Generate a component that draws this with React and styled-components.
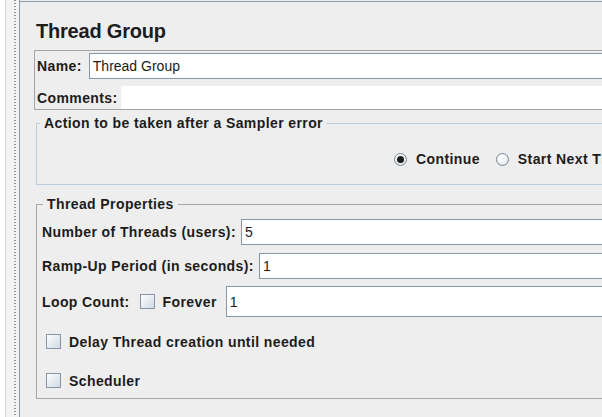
import styled, { createGlobalStyle } from 'styled-components';

const GlobalStyle = createGlobalStyle`
  html, body {
    margin: 0;
    padding: 0;
    overflow: hidden;
    background: #eeeeee;
  }
  body {
    font-family: "Liberation Sans", Arial, sans-serif;
    color: #1c1c1c;
  }
`;

const Screen = styled.div`
  display: flex;
  width: 602px;
  height: 417px;
  overflow: hidden;
`;

// tree / panel splitter on the left
const Gutter = styled.div`
  flex: 0 0 20px;
  display: flex;
  background: #f3f3f3;
  border-left: 5px solid #ffffff;
  box-sizing: border-box;
`;

const GutterEdge = styled.div`
  width: 1px;
  background: #d4d4d4;
`;

const Dots = styled.div`
  width: 2px;
  margin-left: 8px;
  background: repeating-linear-gradient(
    to bottom,
    #9a9a9a 0,
    #9a9a9a 1px,
    transparent 1px,
    transparent 3px
  );
`;

const GutterLine = styled.div`
  width: 1px;
  margin-left: auto;
  background: #8a98a8;
`;

const Panel = styled.div`
  flex: 0 0 900px;
  margin-top: 1px;
  border-top: 1px solid #8c9aaa;
  padding: 17px 0 0 14px;
  box-sizing: border-box;
  background: #eeeeee;
`;

const Title = styled.h1`
  margin: 0 0 7px 2px;
  font-size: 20px;
  line-height: 24px;
  font-weight: bold;
  letter-spacing: -0.2px;
`;

const Label = styled.span`
  font-size: 14px;
  font-weight: bold;
  letter-spacing: 0.4px;
  white-space: nowrap;
  margin-right: ${p => p.$gap || 5}px;
`;

const NameBox = styled.div`
  border: 1px solid #a4a4a4;
  height: 60px;
  box-sizing: border-box;
  padding: 2px 0 0 2px;
`;

const Row = styled.div`
  display: flex;
  align-items: center;
  height: ${p => p.$height || 26}px;
  margin-top: ${p => p.$top || 0}px;
`;

const TextField = styled.div`
  flex: 1;
  height: 100%;
  box-sizing: border-box;
  display: flex;
  align-items: center;
  padding: 0 3px;
  background: #ffffff;
  border: 1px solid #8597aa;
  font-size: 14px;
  white-space: nowrap;
`;

const CommentArea = styled.div`
  flex: 1;
  height: 100%;
  background: #ffffff;
`;

const Group = styled.fieldset`
  margin: ${p => p.$top}px 0 0 2px;
  padding: 0 0 ${p => p.$bottom}px 0;
  border: 1px solid ${p => p.$line};
  min-width: 0;
`;

const Legend = styled.legend`
  margin-left: ${p => p.$shift}px;
  padding: 0 4px;
  font-size: 14px;
  line-height: 16px;
  font-weight: bold;
  letter-spacing: 0.4px;
`;

const RadioRow = styled.div`
  display: flex;
  align-items: center;
  height: 16px;
  margin-top: 20px;
  padding-left: 357px;
`;

const Option = styled.label`
  display: flex;
  align-items: center;
  margin-right: 16px;
  font-size: 14px;
  font-weight: bold;
  letter-spacing: 0.4px;
  white-space: nowrap;
`;

const Radio = styled.span`
  position: relative;
  width: 13px;
  height: 13px;
  margin-right: 9px;
  border-radius: 50%;
  box-sizing: border-box;
  border: 1px solid #7c8895;
  background: radial-gradient(circle at 40% 35%, #ffffff 0, #f2f5f8 45%, #c9d3de 100%);

  &::after {
    content: '';
    display: ${p => (p.$on ? 'block' : 'none')};
    position: absolute;
    left: 2px;
    top: 2px;
    width: 7px;
    height: 7px;
    border-radius: 50%;
    background: #1c1c1c;
  }
`;

const Check = styled.span`
  flex: 0 0 15px;
  height: 15px;
  box-sizing: border-box;
  border: 1px solid #8795a6;
  background: linear-gradient(135deg, #ffffff 0, #e9eef4 45%, #cfd9e5 100%);
  margin-left: ${p => p.$left || 0}px;
  margin-right: 8px;
`;

const CheckText = styled.span`
  font-size: 14px;
  font-weight: bold;
  letter-spacing: 0.4px;
  white-space: nowrap;
  margin-right: ${p => p.$gap || 0}px;
`;

const PropsBody = styled.div`
  padding: 7px 0 0 5px;
`;

const App = () => {
  return (
    <>
      <GlobalStyle />
      <Screen>
        <Gutter>
          <GutterEdge />
          <Dots />
          <GutterLine />
        </Gutter>
        <Panel>
          <Title>Thread Group</Title>

          <NameBox>
            <Row $height={26}>
              <Label $gap={7}>Name:</Label>
              <TextField>Thread Group</TextField>
            </Row>
            <Row $height={23} $top={7}>
              <Label $gap={3}>Comments:</Label>
              <CommentArea />
            </Row>
          </NameBox>

          <Group $top={5} $bottom={17} $line="#b9cee3">
            <Legend $shift={3}>Action to be taken after a Sampler error</Legend>
            <RadioRow>
              <Option><Radio $on />Continue</Option>
              <Option><Radio />Start Next Thread Loop</Option>
            </RadioRow>
          </Group>

          <Group $top={11} $bottom={10} $line="#a6a6a6">
            <Legend $shift={6}>Thread Properties</Legend>
            <PropsBody>
              <Row $height={26}>
                <Label>Number of Threads (users):</Label>
                <TextField>5</TextField>
              </Row>
              <Row $height={26} $top={8}>
                <Label>Ramp-Up Period (in seconds):</Label>
                <TextField>1</TextField>
              </Row>
              <Row $height={31} $top={7}>
                <Label $gap={10}>Loop Count:</Label>
                <Check />
                <CheckText $gap={9}>Forever</CheckText>
                <TextField>1</TextField>
              </Row>
              <Row $height={15} $top={17}>
                <Check $left={4} />
                <CheckText>Delay Thread creation until needed</CheckText>
              </Row>
              <Row $height={15} $top={24}>
                <Check $left={4} />
                <CheckText>Scheduler</CheckText>
              </Row>
            </PropsBody>
          </Group>
        </Panel>
      </Screen>
    </>
  );
};

export default App;
